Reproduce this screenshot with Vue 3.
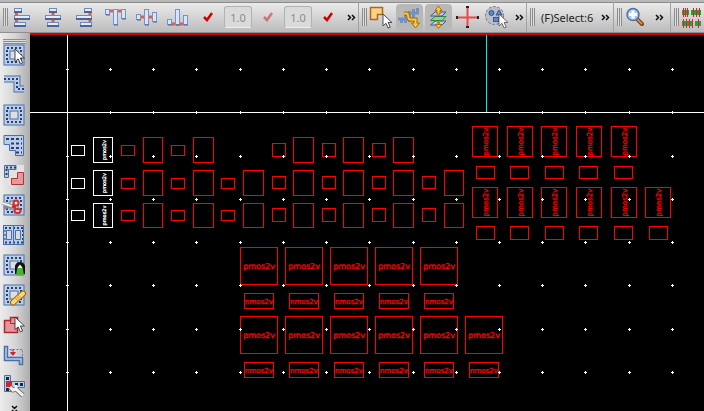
<script setup>
import { ref } from 'vue'

const spacingX = ref('1.0')
const spacingY = ref('1.0')

// Guard-ring and chopping tools. "film" is the centre line of the blue strip.
const ring = 'M4 4H18V18H4Z'
const tools = [
  { id: 'select-ring', label: 'Select guard ring', film: ring },
  { id: 'path', label: 'Create path', film: 'M1 5H14V15H21' },
  { id: 'ring', label: 'Create guard ring', film: ring },
  { id: 'stair', label: 'Create staircase', film: '' },
  { id: 'merge', label: 'Merge shapes', film: '' },
  { id: 'chop', label: 'Chop ring', film: ring },
  { id: 'split', label: 'Split ring', film: '' },
  { id: 'convert', label: 'Convert ring', film: ring },
  { id: 'heal', label: 'Heal ring', film: ring },
  { id: 'pick', label: 'Pick polygon', film: '' },
  { id: 'stretch', label: 'Stretch path', film: '' },
  { id: 'setup', label: 'Options', film: '' },
]

const arrow = 'M0 0V14L3.5 11L6 16.5L8.5 15.5L6 10H10.5Z'

const gridX = [67, 110, 153, 196, 240, 283, 326, 369, 413, 456, 499, 542, 585, 629, 672]
const gridY = [69, 112, 156, 199, 242, 285, 329, 372]
const points = gridX.flatMap((x) => gridY.map((y) => ({ x, y })))

// Every device is { x, y, w, h } in page units, with an optional label.
const devices = []
const add = (xs, y, w, h, extra = {}) =>
  xs.forEach((x) => devices.push({ x, y, w, h, ...extra }))

const rows = [
  { big: 137, bigH: 26, small: 145, square: 143, squareH: 14 },
  { big: 170, bigH: 26, small: 178, square: 176, squareH: 13 },
  { big: 203, bigH: 25, small: 210, square: 208, squareH: 14 },
]
rows.forEach((r, i) => {
  const full = i > 0
  add([71], r.small, 14, 11, { color: 'white' })
  add([93], r.big, 20, r.bigH, { color: 'white', label: 'pmos2v', turned: true, size: 5 })
  add(full ? [121, 171, 221] : [121, 171], r.small, 14, 11)
  add([143], r.big, 20, r.bigH)
  add(full ? [193, 243] : [193], r.big, 21, r.bigH)
  add(full ? [272, 322, 372, 422] : [272, 322, 372], r.square, 14, r.squareH)
  add([293, 343, 393], r.big, 21, r.bigH)
  if (full) add([444], r.big, 20, r.bigH)
})

const turned = { label: 'pmos2v', turned: true, size: 7 }
add([472, 507, 541, 576, 611], 126, 26, 31, turned)
add([476, 510, 545, 579, 614], 166, 19, 13)
add([472, 507, 541, 576, 611, 645], 187, 26, 31, turned)
add([476, 510, 545, 579, 614, 649], 226, 19, 14)

const five = [240, 285, 330, 375, 420]
const six = [...five, 465]
const inset = (xs) => xs.map((x) => x + 4)
add(five, 247, 38, 38, { label: 'pmos2v', size: 8 })
add(inset(five), 293, 30, 16, { label: 'nmos2v', size: 7 })
add(six, 316, 38, 38, { label: 'pmos2v', size: 8 })
add(inset(six), 362, 30, 16, { label: 'nmos2v', size: 7 })

const place = (d) => {
  const cx = d.x + d.w / 2
  const cy = d.y + d.h / 2
  return d.turned
    ? `translate(${cx + 3} ${cy}) rotate(-90)`
    : `translate(${cx} ${cy + 3})`
}
</script>

<template>
  <div class="editor">
    <header class="toolbar">
      <section class="group">
        <span class="grip"></span>
        <button class="tool" aria-label="Align left">
          <svg width="22" height="22">
            <path class="link" d="M4.500 6v12" />
            <g class="bar-h"><rect x="2.500" y="2.500" width="7" height="3" /><rect x="2.500" y="9.500" width="15" height="3" /><rect x="2.500" y="16.500" width="11" height="3" /></g>
            <path class="shade" d="M2 6h8M2 13h16M2 20h12" />
          </svg>
        </button>
        <button class="tool" aria-label="Align centres horizontally">
          <svg width="22" height="22">
            <path class="link" d="M10 6v12" />
            <g class="bar-h"><rect x="6.500" y="2.500" width="7" height="3" /><rect x="2.500" y="9.500" width="15" height="3" /><rect x="4.500" y="16.500" width="11" height="3" /></g>
            <path class="shade" d="M6 6h8M2 13h16M4 20h12" />
          </svg>
        </button>
        <button class="tool" aria-label="Align right">
          <svg width="22" height="22">
            <path class="link" d="M16 6v12" />
            <g class="bar-h"><rect x="10.500" y="2.500" width="7" height="3" /><rect x="2.500" y="9.500" width="15" height="3" /><rect x="6.500" y="16.500" width="11" height="3" /></g>
            <path class="shade" d="M10 6h8M2 13h16M6 20h12" />
          </svg>
        </button>
        <button class="tool" aria-label="Align top">
          <svg width="22" height="22">
            <path class="link" d="M4 5h14" />
            <g class="bar-v"><rect x=".5" y="3.500" width="4" height="5" /><rect x="8.500" y="3.500" width="4" height="15" /><rect x="16.500" y="3.500" width="4" height="9" /></g>
            <path class="shade" d="M1 9h4M9 19h4M17 13h4" />
          </svg>
        </button>
        <button class="tool" aria-label="Align middles">
          <svg width="22" height="22">
            <path class="link" d="M4 11h14" />
            <g class="bar-v"><rect x=".5" y="8.500" width="4" height="5" /><rect x="8.500" y="3.500" width="4" height="15" /><rect x="16.500" y="6.500" width="4" height="9" /></g>
            <path class="shade" d="M1 14h4M9 19h4M17 16h4" />
          </svg>
        </button>
        <button class="tool" aria-label="Align bottom">
          <svg width="22" height="22">
            <path class="link" d="M4 18h14" />
            <g class="bar-v"><rect x=".5" y="13.500" width="4" height="5" /><rect x="8.500" y="3.500" width="4" height="15" /><rect x="16.500" y="9.500" width="4" height="9" /></g>
            <path class="shade" d="M1 19h4M9 19h4M17 19h4" />
          </svg>
        </button>
        <button class="tool narrow" aria-label="Apply alignment">
          <svg width="10" height="10"><path class="tick" d="M1 5L4 8L9 1" /></svg>
        </button>
        <input v-model="spacingX" class="amount" aria-label="Horizontal spacing" />
        <button class="tool narrow faded" aria-label="Apply horizontal spacing">
          <svg width="10" height="10"><path class="tick" d="M1 5L4 8L9 1" /></svg>
        </button>
        <input v-model="spacingY" class="amount" aria-label="Vertical spacing" />
        <button class="tool narrow" aria-label="Apply vertical spacing">
          <svg width="10" height="10"><path class="tick" d="M1 5L4 8L9 1" /></svg>
        </button>
        <button class="more slim" aria-label="More alignment tools">
          <svg width="9" height="7"><path d="M1 1L3.500 3.500L1 6M5 1L7.500 3.500L5 6" /></svg>
        </button>
      </section>

      <section class="group">
        <span class="grip"></span>
        <button class="tool pick" aria-label="Partial select">
          <svg width="25" height="24">
            <path d="M1.500 2.500H13.500V9.500H8.500V14.500H1.500Z" fill="#ffd083" stroke="#a86a1c" stroke-width="1.500" />
            <path :d="arrow" transform="translate(14 9) scale(.85)" fill="#fff" stroke="#333" />
          </svg>
        </button>
        <button class="tool mode pressed" aria-label="Follow path">
          <svg width="25" height="24">
            <path d="M4.500 13V18M8.500 10V18M12.500 6V17M16.500 4V15M20.500 3V9M1 14H10M12 8H22" stroke="#7690c2" stroke-width="3" fill="none" />
            <path d="M7 8.500H9.500C12.500 8.500 10 14.500 13 14.500H18.500V20" stroke="#a66a00" stroke-width="4" fill="none" />
            <path d="M14.500 18H22.500L18.500 23Z" fill="#ffc640" stroke="#a66a00" />
            <path d="M7 8.500H9.500C12.500 8.500 10 14.500 13 14.500H18.500V20" stroke="#ffc640" stroke-width="2" fill="none" />
          </svg>
        </button>
        <button class="tool mode pressed" aria-label="Layer stack">
          <svg width="25" height="24">
            <path d="M9 16H20L16 20H4.500Z" fill="#b9cdf0" stroke="#3e5b95" />
            <path d="M12.500 5V19" stroke="#c88a10" stroke-width="3" />
            <path d="M9 11.500H20L16 15.500H4.500Z" fill="#8fd693" stroke="#2b8c3c" />
            <path d="M9 7H20L16 11H4.500Z" fill="#b9cdf0" fill-opacity=".7" stroke="#3e5b95" />
            <path d="M12.500 1L16 5.500H14V9H11V5.500H9ZM9.500 19.500H15.500L12.500 23.500Z" fill="#ffc640" stroke="#ac7100" />
          </svg>
        </button>
        <button class="tool mode" aria-label="Crosshair">
          <svg width="25" height="24">
            <path d="M1 12.500H24M12.500 1V23" stroke="#f04848" stroke-width="2" />
            <path d="M1 12.500h2M22 12.500h2M12.500 1v2M12.500 21v2" stroke="#222" stroke-width="3" />
          </svg>
        </button>
        <button class="tool mode" aria-label="Select group">
          <svg width="25" height="24">
            <circle cx="10.500" cy="10.500" r="9" fill="#b9bec8" stroke="#777" stroke-dasharray="3 1.500" />
            <g fill="#6088ce" stroke="#34558e"><circle cx="7.500" cy="8" r="2.500" /><path d="M15 5L18 10H12Z" /><rect x="9.500" y="12.500" width="5" height="4" /></g>
            <path :d="arrow" transform="translate(15 9) scale(.85)" fill="#fff" stroke="#555" />
          </svg>
        </button>
        <button class="more slim" aria-label="More selection tools">
          <svg width="9" height="7"><path d="M1 1L3.500 3.500L1 6M5 1L7.500 3.500L5 6" /></svg>
        </button>
      </section>

      <section class="group">
        <span class="grip"></span>
        <span class="status">(F)Select:6</span>
        <button class="more" aria-label="More status">
          <svg width="9" height="7"><path d="M1 1L3.500 3.500L1 6M5 1L7.500 3.500L5 6" /></svg>
        </button>
      </section>

      <section class="group">
        <span class="grip"></span>
        <button class="tool zoom" aria-label="Zoom in">
          <svg width="20" height="22">
            <path d="M11.500 12.500L17 18" stroke="#754015" stroke-width="4" stroke-linecap="round" />
            <path d="M12 13L16.500 17.500" stroke="#d78a3c" stroke-width="2" stroke-linecap="round" />
            <circle cx="8" cy="8.500" r="6" fill="#a9c7ec" stroke="#4f73a8" stroke-width="1.500" />
            <path d="M8 4.500V12.500M4 8.500H12" stroke="#fff" stroke-width="3" />
          </svg>
        </button>
        <button class="more wide" aria-label="More zoom tools">
          <svg width="9" height="7"><path d="M1 1L3.500 3.500L1 6M5 1L7.500 3.500L5 6" /></svg>
        </button>
      </section>

      <section class="group last">
        <span class="grip"></span>
        <button class="tool zoom" aria-label="Module generator">
          <svg width="22" height="22">
            <path d="M1 6.500H8M10 6.500H20M1 17.500H12M14 17.500H20" stroke="#24a148" stroke-width="5" />
            <path d="M2.500 2V11M4.500 2V11M6.500 2V11M12.500 2V11M15.500 2V11M18.500 2V11M2.500 13V22M5.500 13V22M8.500 13V22M11.500 13V22M17.500 13V22" stroke="#e82020" />
          </svg>
        </button>
      </section>
    </header>

    <div class="workspace">
      <aside class="sidebar">
        <span class="grip flat"></span>
        <button v-for="t in tools" :key="t.id" class="side-tool" :aria-label="t.label">
          <svg width="26" height="22" overflow="visible">
            <template v-if="t.film">
              <path v-if="t.id !== 'path'" d="M5 5H17V17H5Z" fill="#dfdfdf" />
              <path class="film edge" :d="t.film" />
              <path class="film body" :d="t.film" />
              <path class="film holes" :d="t.film" />
            </template>
            <path v-if="t.id === 'select-ring'" :d="arrow" transform="translate(12 5) scale(.9)" fill="#fff" stroke="#333" />
            <g v-else-if="t.id === 'stair'">
              <path d="M1 1.500H20.500V21.500H12.500V16.500H6.500V10.500H1Z" fill="#b9cdec" stroke="#4a6fa8" />
              <path d="M3 5H19M8 9.500H19M8 14H19M13 18.500H19" stroke="#2c3f66" stroke-width="2" stroke-dasharray="3 2" />
            </g>
            <g v-else-if="t.id === 'merge'">
              <rect x="1" y="1" width="20" height="20" fill="#e2e2e2" />
              <path d="M1.500 1.500H13V5.500H5.500V13.500H1.500Z" fill="#b9cdec" stroke="#4a6fa8" />
              <path d="M3 3.500H13M3.500 5V13" stroke="#2c3f66" stroke-width="2" stroke-dasharray="2 2" />
              <path d="M14.500 8.500H20.500V20.500H8.500V14.500H14.500Z" fill="#e39a9f" stroke="#b0333b" />
            </g>
            <g v-else-if="t.id === 'chop'">
              <path d="M-1 9L11 13M1 14L11 11" stroke="#888" stroke-width="3" />
              <path d="M-1 9L11 13" stroke="#eee" stroke-width="2" />
              <path d="M9 12L13 14" stroke="#d12b23" stroke-width="3" />
              <g fill="#eee" stroke="#d12b23" stroke-width="2"><circle cx="13" cy="9" r="2.500" /><ellipse cx="14.500" cy="17" rx="3" ry="2" /></g>
            </g>
            <g v-else-if="t.id === 'split'">
              <rect x=".5" y="1.500" width="20" height="19" fill="#b9cdec" stroke="#4a6fa8" />
              <path d="M2 4H20M2 18.500H20" stroke="#2c3f66" stroke-width="2" stroke-dasharray="2 2" />
              <path d="M3.500 6.500H8.500V15.500H3.500ZM12.500 6.500H17.500V15.500H12.500Z" fill="#dadada" stroke="#4a6fa8" />
              <path d="M2 6V16M19.500 6V16" stroke="#2c3f66" stroke-dasharray="2 2" />
              <path d="M10.500 1V21" stroke="#4a6fa8" />
            </g>
            <g v-else-if="t.id === 'convert'">
              <path d="M12 17V12Q13 8 17 8Q21 8 22 12V20H12Z" fill="#111" />
              <path d="M13 21L14.500 13H19.500L21 21Z" fill="#45b52e" />
              <path d="M15 13L17 10.500L19 13V14H15Z" fill="#fff" />
            </g>
            <g v-else-if="t.id === 'heal'">
              <path d="M10 18.500L20 9.500" stroke="#a36b12" stroke-width="6" stroke-linecap="round" />
              <path d="M10 18.500L20 9.500" stroke="#f8d878" stroke-width="4" stroke-linecap="round" />
              <path d="M13 15.500L17 12" stroke="#dda43b" stroke-width="4" stroke-dasharray="1 1" />
            </g>
            <g v-else-if="t.id === 'pick'">
              <path d="M1.500 6.500H7.500V3.500H14.500V18.500H1.500Z" fill="#e6969b" stroke="#ac2931" stroke-width="1.500" />
              <path d="M7.500 6.500V9.500H12.500" fill="none" stroke="#ac2931" />
              <path :d="arrow" transform="translate(12 3) scale(.9)" fill="#fff" stroke="#333" />
            </g>
            <g v-else-if="t.id === 'stretch'">
              <path d="M3 5.500H19.500V14M8 5V13" fill="none" stroke="#6080b0" stroke-dasharray="2 1.500" />
              <path d="M1.500 2.500H4.500V13.500H19.500V20.500H16.500V16.500H1.500Z" fill="#b9cdec" stroke="#4a6fa8" stroke-width="1.500" />
              <path d="M7 8H13L10 12Z" fill="#cf2024" /><path d="M10 5V9" stroke="#cf2024" />
            </g>
            <g v-else-if="t.id === 'setup'">
              <path d="M1.500 1.500H7.500V7.500H21.500V13.500H8.500V17.500H1.500Z" fill="#b9cdec" stroke="#4a6fa8" />
              <path d="M3 4.500H6M12 10.500H20M3 15.500H6" stroke="#182744" stroke-width="3" stroke-dasharray="3 2" />
              <path d="M3 7H9V13H3Z" fill="#c92a30" />
              <path d="M7 13L10 16L13 15L20 21.500" fill="none" stroke="#777" stroke-width="5" />
              <path d="M7 13L10 16L13 15L20 21.500M13 15V11" fill="none" stroke="#f2f2f2" stroke-width="3" />
            </g>
          </svg>
        </button>
        <button class="more down" aria-label="More tools">
          <svg width="7" height="7"><path d="M1 2L3.500 4.500L6 2M1 6L3.500 8.500L6 6" /></svg>
        </button>
      </aside>

      <main class="canvas">
        <svg class="layout" role="img" aria-label="Layout of pmos2v and nmos2v devices">
          <g transform="translate(-30 -35)">
            <path class="axis" d="M67.500 35V2000M30 112.500H4000" />
            <path class="ruler" d="M486.500 35V112" />
            <g v-for="(d, i) in devices" :key="i" :class="['device', d.color]">
              <rect :x="d.x + 0.5" :y="d.y + 0.5" :width="d.w - 1" :height="d.h - 1" />
              <text v-if="d.label" :transform="place(d)" :font-size="d.size" text-anchor="middle">{{ d.label }}</text>
            </g>
            <path
              v-for="p in points"
              :key="`${p.x}-${p.y}`"
              class="point"
              :d="`M${p.x - 1} ${p.y + 0.5}h3M${p.x + 0.5} ${p.y - 1}v3`"
            />
          </g>
        </svg>
      </main>
    </div>
  </div>
</template>

<style>
body {
  background: #000;
}
</style>

<style scoped>
.editor {
  display: flex;
  flex-direction: column;
  min-height: 100vh;
  font-family: "Noto Sans", "Open Sans", sans-serif;
  font-size: 11px;
}

button {
  display: flex;
  align-items: center;
  justify-content: center;
  flex: none;
  margin: 0;
  padding: 0;
  border: 0;
  background: none;
}

svg {
  display: block;
}

.toolbar {
  display: flex;
  box-sizing: border-box;
  height: 33px;
  overflow: hidden;
  border-top: 2px solid #b8b8b8;
  border-bottom: 1px solid #8f8f8f;
  background: linear-gradient(#ececec, #bcbcbc);
  box-shadow: inset 0 1px #8b8b8b;
}

.group {
  display: flex;
  flex: none;
  align-items: center;
  gap: 2px;
  padding-left: 3px;
  border-right: 1px solid #a2a2a2;
}

.group.last {
  flex: 1;
  border-right: 0;
}

.grip {
  flex: none;
  width: 5px;
  height: 18px;
  margin-right: -2px;
  background: repeating-linear-gradient(90deg, #8c8c8c 0 1px, #dedede 1px 2px);
}

.group:not(:first-child) .grip {
  margin-right: 0;
}

.tool {
  width: 29px;
  height: 27px;
}

.tool.narrow {
  width: 28px;
}

.tool.pick {
  width: 25px;
}

.tool.zoom {
  width: 22px;
}

.tool.mode {
  width: 27px;
}

.tool.pressed {
  border-radius: 4px;
  background: #b8b8b8;
}

.faded {
  opacity: 0.45;
}

.amount {
  box-sizing: border-box;
  width: 28px;
  height: 22px;
  padding: 0 4px;
  border: 1px solid #b2b2b2;
  border-bottom-color: #ededed;
  border-radius: 3px;
  background: #dadada;
  color: #8a8a8a;
  font: inherit;
  text-align: center;
}

.status {
  padding: 0 2px 0 4px;
  color: #222;
  white-space: nowrap;
}

.more {
  width: 16px;
  height: 27px;
}

.more.slim {
  width: 14px;
}

.more.wide {
  width: 22px;
}

.more path {
  fill: none;
  stroke: #111;
  stroke-width: 1.5;
}

.tick {
  fill: none;
  stroke: #d00000;
  stroke-width: 2.5;
}

.link {
  stroke: #f0583a;
  stroke-width: 3;
}

.bar-h rect {
  fill: #e4ecfa;
  stroke: #6f8cc4;
}

.bar-v rect {
  fill: #dbe4f7;
  stroke: #7592cc;
}

.shade {
  stroke: #4a659a;
  stroke-width: 2;
}

.bar-v + .shade {
  stroke-width: 1;
}

.workspace {
  display: flex;
  flex: 1;
}

.sidebar {
  display: flex;
  box-sizing: border-box;
  flex: none;
  flex-direction: column;
  gap: 8px;
  width: 30px;
  padding: 6px 0 0 3px;
  background: linear-gradient(90deg, #ececec, #d6d6d6 50%, #adadad);
}

.grip.flat {
  width: 23px;
  height: 5px;
  margin: 0 0 -8px;
  background: repeating-linear-gradient(#8c8c8c 0 1px, #dedede 1px 2px);
}

.side-tool {
  width: 22px;
  height: 22px;
  justify-content: flex-start;
}

.film {
  fill: none;
}

.film.edge {
  stroke: #4a6fa8;
  stroke-width: 7;
}

.film.body {
  stroke: #b9cdec;
  stroke-width: 5;
}

.film.holes {
  stroke: #2c3f66;
  stroke-width: 2;
  stroke-dasharray: 2 2;
}

.more.down {
  width: 22px;
  height: 7px;
}

.canvas {
  display: flex;
  flex: 1;
  min-width: 0;
  border-top: 2px solid #d00000;
  background: #000;
}

.layout {
  flex: 1;
  width: 100%;
  min-width: 0;
  overflow: hidden;
  font-family: "DejaVu Sans", sans-serif;
  text-rendering: geometricPrecision;
}

.axis,
.point {
  stroke: #fff;
}

.ruler {
  stroke: #00f0f0;
}

.device rect {
  fill: none;
  stroke: #f00;
}

.device text {
  fill: #f00;
  stroke: #f00;
  stroke-width: 0.3;
}

.device.white rect {
  stroke: #fff;
}

.device.white text {
  fill: #fff;
  stroke: #fff;
}
</style>
